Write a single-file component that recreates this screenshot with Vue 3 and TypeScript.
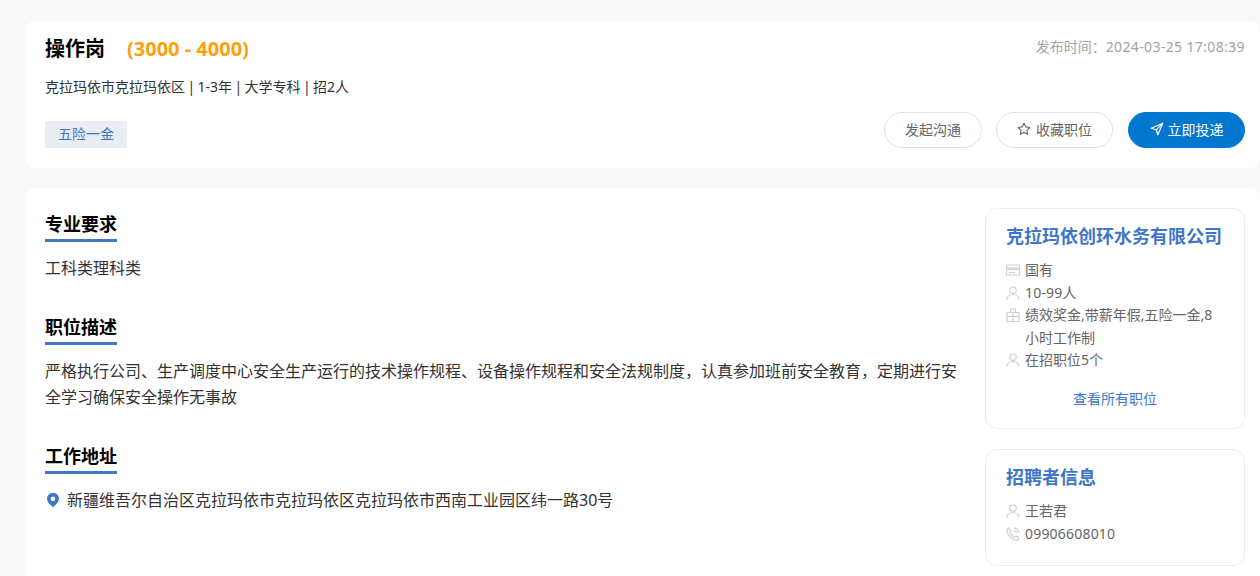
<template>
  <div class="page">
    <section class="head-card">
      <div class="head-row">
        <div class="title-line">
          <h1 class="job-name">操作岗</h1>
          <span class="salary">(3000 - 4000)</span>
        </div>
        <span class="pub-time">发布时间：<span class="digits">2024-03-25 17:08:39</span></span>
      </div>
      <p class="job-meta">克拉玛依市克拉玛依区 | 1-3年 | 大学专科 | 招2人</p>
      <div class="action-row">
        <span class="welfare-tag">五险一金</span>
        <div class="actions">
          <button type="button" class="btn">发起沟通</button>
          <button type="button" class="btn btn-wide">
            <svg class="btn-icon" viewBox="0 0 14 14" fill="none" stroke="#666" stroke-width="1.1" stroke-linejoin="round">
              <path d="M7 1.200l1.800 3.700 4 .6-2.900 2.800.7 4L7 10.400l-3.600 1.900.7-4L1.200 5.500l4-.6z" />
            </svg>
            收藏职位
          </button>
          <button type="button" class="btn btn-wide btn-primary">
            <svg class="btn-icon" viewBox="0 0 14 14" fill="none" stroke="#fff" stroke-width="1.2" stroke-linejoin="round">
              <path d="M12.800 1.200L1.200 6.200l5 1.600 1.600 5z" />
              <path d="M6.200 7.800l6.600-6.600" />
            </svg>
            立即投递
          </button>
        </div>
      </div>
    </section>

    <section class="body-card">
      <div class="detail">
        <div class="block">
          <h2 class="block-title">专业要求</h2>
          <p class="block-text">工科类理科类</p>
        </div>
        <div class="block">
          <h2 class="block-title">职位描述</h2>
          <p class="block-text">严格执行公司、生产调度中心安全生产运行的技术操作规程、设备操作规程和安全法规制度，认真参加班前安全教育，定期进行安全学习确保安全操作无事故</p>
        </div>
        <div class="block">
          <h2 class="block-title">工作地址</h2>
          <p class="block-text address">
            <svg class="pin" viewBox="0 0 14 16">
              <path fill="#3f76c8" fill-rule="evenodd" d="M7 .8a6 6 0 0 1 6 6c0 3-2.400 5.600-6 8.400C3.400 12.400 1 9.800 1 6.800a6 6 0 0 1 6-6zm0 3.600a2.400 2.400 0 1 0 0 4.800 2.400 2.400 0 0 0 0-4.800z" />
            </svg>
            新疆维吾尔自治区克拉玛依市克拉玛依区克拉玛依市西南工业园区纬一路30号
          </p>
        </div>
      </div>

      <aside class="side">
        <div class="side-card company">
          <h3 class="side-title">克拉玛依创环水务有限公司</h3>
          <ul class="info-list">
            <li v-for="item in companyInfo" :key="item.text" class="info-item">
              <svg class="info-icon" viewBox="0 0 14 14" fill="none" stroke="#cfcfcf" stroke-width="1.200">
                <path v-for="d in icons[item.icon]" :key="d" :d="d" />
              </svg>
              <span :class="{ digits: item.digits }">{{ item.text }}</span>
            </li>
          </ul>
          <a class="all-jobs">查看所有职位</a>
        </div>
        <div class="side-card recruiter">
          <h3 class="side-title">招聘者信息</h3>
          <ul class="info-list">
            <li v-for="item in recruiterInfo" :key="item.text" class="info-item">
              <svg class="info-icon" viewBox="0 0 14 14" fill="none" stroke="#cfcfcf" stroke-width="1.200">
                <path v-for="d in icons[item.icon]" :key="d" :d="d" />
              </svg>
              <span :class="{ digits: item.digits }">{{ item.text }}</span>
            </li>
          </ul>
        </div>
      </aside>
    </section>
  </div>
</template>

<script setup lang="ts">
type IconName = 'card' | 'user' | 'gift' | 'phone'

interface InfoItem {
  icon: IconName
  text: string
  digits?: boolean
}

const icons: Record<IconName, string[]> = {
  card: ['M1.500 2h11a1 1 0 0 1 1 1v8a1 1 0 0 1-1 1h-11a1 1 0 0 1-1-1V3a1 1 0 0 1 1-1z', 'M.5 5h13', 'M.5 6.500h13', 'M3 9.500h6'],
  user: ['M7 1a3.200 3.200 0 1 1 0 6.400A3.200 3.200 0 0 1 7 1z', 'M1 13.500c0-3 2.600-5 6-5s6 2 6 5'],
  gift: ['M1 4.500h12v9H1z', 'M7 4.500v9', 'M1 8.500h12', 'M4.500 4.500V1h5v3.500'],
  phone: ['M2.500 1l2.500 2.500-1.200 1.800c.8 2 2.700 3.900 4.900 4.900L10.500 9l2.500 2.500-1.500 2C6 13 1 8 .8 2.500z', 'M8 .8c2.800.3 4.900 2.400 5.200 5.200', 'M8 3.300c1.500.2 2.500 1.200 2.700 2.700'],
}

const companyInfo: InfoItem[] = [
  { icon: 'card', text: '国有' },
  { icon: 'user', text: '10-99人', digits: true },
  { icon: 'gift', text: '绩效奖金,带薪年假,五险一金,8小时工作制' },
  { icon: 'user', text: '在招职位5个' },
]

const recruiterInfo: InfoItem[] = [
  { icon: 'user', text: '王若君' },
  { icon: 'phone', text: '09906608010', digits: true },
]
</script>

<style>
html,
body {
  margin: 0;
  background: #f9f9f9;
}
</style>

<style scoped>
.page {
  padding: 21px 0 0 25px;
  height: 555px;
  overflow: hidden;
  font-family: "Noto Sans", "Noto Sans CJK SC", sans-serif;
  color: #333;
}

.head-card {
  height: 147px;
  box-sizing: border-box;
  padding: 13px 15px 0 20px;
  background: #fff;
  border-radius: 10px;
}

.head-row {
  display: flex;
  justify-content: space-between;
  align-items: flex-start;
  height: 30px;
}

.title-line {
  display: flex;
  align-items: center;
  gap: 22px;
}

.job-name {
  margin: 0;
  font-size: 20px;
  line-height: 30px;
  font-weight: 700;
  color: #000;
}

.salary {
  font-size: 20px;
  line-height: 30px;
  font-weight: 700;
  color: #ff9f0f;
}

.pub-time {
  font-size: 14px;
  line-height: 26px;
  color: #a3a3a3;
}

.pub-time .digits {
  letter-spacing: 0.37px;
}

.job-meta {
  margin: 13px 0 0;
  font-size: 14px;
  line-height: 20px;
  word-spacing: -1.25px;
}

.action-row {
  display: flex;
  justify-content: space-between;
  align-items: flex-end;
  margin-top: 15px;
}

.welfare-tag {
  width: 82px;
  height: 27px;
  line-height: 26px;
  text-align: center;
  font-size: 14px;
  color: #3f76c8;
  background: #e9eef5;
  border-radius: 2px;
}

.actions {
  display: flex;
  gap: 14px;
}

.btn {
  display: flex;
  align-items: center;
  justify-content: center;
  gap: 5px;
  box-sizing: border-box;
  width: 98px;
  height: 36px;
  padding: 0 0 2px;
  font: inherit;
  font-size: 14px;
  color: #666;
  background: #fff;
  border: 1px solid #dfdfe6;
  border-radius: 18px;
}

.btn-wide {
  width: 117px;
}

.btn-primary {
  margin-left: 1px;
  gap: 4px;
  color: #fff;
  background: #0078d0;
  border-color: #0078d0;
}

.btn-icon {
  width: 14px;
  height: 14px;
}

.body-card {
  display: flex;
  justify-content: space-between;
  margin-top: 20px;
  padding: 20px 15px 0 20px;
  height: 420px;
  background: #fff;
  border-radius: 10px 10px 0 0;
}

.detail {
  width: 915px;
}

.block {
  margin-bottom: 30px;
}

.block-title {
  display: table;
  margin: 0;
  padding-top: 2px;
  font-size: 18px;
  line-height: 29px;
  font-weight: 700;
  color: #000;
  border-bottom: 3px solid #3f76c8;
}

.block-text {
  margin: 13px 0 0;
  font-size: 16px;
  line-height: 26px;
}

.address {
  display: flex;
  align-items: center;
  gap: 6px;
}

.pin {
  width: 16px;
  height: 16px;
  flex-shrink: 0;
}

.side {
  width: 260px;
  display: flex;
  flex-direction: column;
  gap: 20px;
}

.side-card {
  box-sizing: border-box;
  padding: 14px 20px 13px;
  background: #fff;
  border: 1px solid #ededed;
  border-radius: 12px;
}

.company {
  height: 221px;
}

.recruiter {
  height: 117px;
}

.side-title {
  margin: 0 0 9px;
  font-size: 18px;
  line-height: 27px;
  font-weight: 700;
  color: #3f76c8;
}

.info-list {
  margin: 0;
  padding: 0;
  list-style: none;
}

.info-item {
  display: flex;
  gap: 5px;
  font-size: 14px;
  line-height: 22.5px;
  color: #666;
}

.info-item .digits {
  letter-spacing: 0.2px;
}

.info-icon {
  flex-shrink: 0;
  width: 14px;
  height: 14px;
  margin-top: 4px;
}

.all-jobs {
  display: block;
  margin-top: 16px;
  text-align: center;
  font-size: 14px;
  line-height: 22px;
  color: #3f76c8;
}
</style>
